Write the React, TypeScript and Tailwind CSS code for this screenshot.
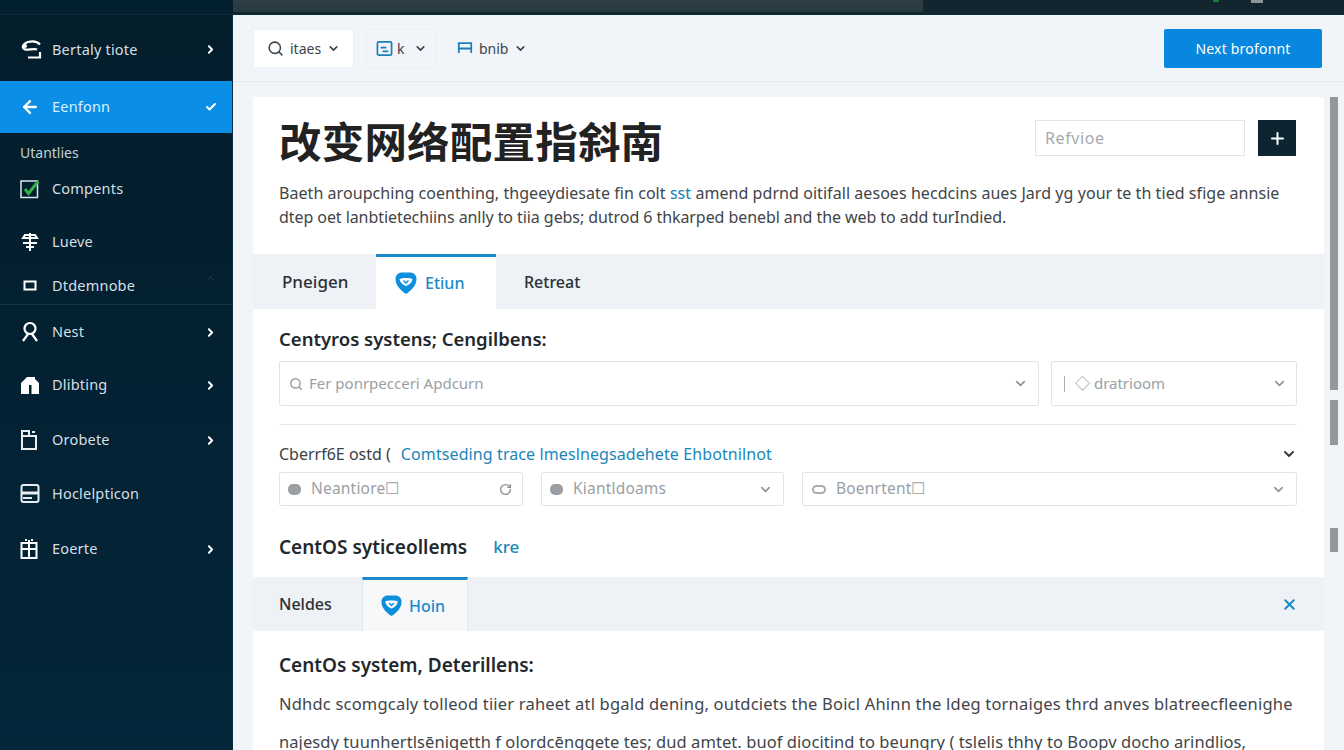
import { ArrowLeft, Check, ChevronDown, ChevronRight, ChevronUp, Plus, RotateCw, Search, X } from "lucide-react";
import type { ReactNode } from "react";

const sans = "font-['Noto_Sans','Noto_Sans_CJK_SC',sans-serif]";

function Shield({ className }: { className?: string }) {
  return (
    <svg viewBox="0 0 24 24" className={className}>
      <path d="M12 23C6 19 1.500 14 1.500 8 1.500 4 4.500 1.500 8 1.500h8c3.500 0 6.500 2.500 6.500 6.500 0 6-4.500 11-10.500 15z" fill="#0e8fdc" />
      <path d="M5.500 8c2-1.500 11-1.500 13 0-.5 3.500-3.500 6-6.500 7-3-1-6-3.500-6.500-7z" fill="#fff" />
      <path d="M9.500 9.500 12 12l2.500-2.500" fill="none" stroke="#0e8fdc" strokeWidth="1.500" />
    </svg>
  );
}

function SideIcon({ name }: { name: string }) {
  if (name === "sync")
    return (
      <svg viewBox="0 0 22 22" className="w-[22px] h-[22px]" fill="none" stroke="#fff" strokeWidth="2.200">
        <path d="M20 5.500C17 2 12 2 8 3 3 4.500 1 9 5 10.500c3 1 9-1.500 12 0" />
        <path d="M20 13v5.500H8" />
        <circle cx="5" cy="7" r="2" fill="#fff" stroke="none" />
      </svg>
    );
  if (name === "check")
    return (
      <svg viewBox="0 0 20 20" className="w-[20px] h-[20px]" fill="none">
        <rect x="1" y="2" width="16.500" height="16.500" stroke="#dfe7ea" strokeWidth="1.500" />
        <path d="M5 10l3.500 4.500L18 2.500" stroke="#32b44a" strokeWidth="3" />
      </svg>
    );
  if (name === "post")
    return (
      <svg viewBox="0 0 20 20" className="w-[20px] h-[20px]" fill="none" stroke="#fff" strokeWidth="2">
        <path d="M10 1v18M3 6h14l-2-3H5zM3 11h14M6 15h8" />
      </svg>
    );
  if (name === "box")
    return (
      <svg viewBox="0 0 14 12" className="w-[14px] h-[12px] ml-[3px]" fill="none" stroke="#fff" strokeWidth="2">
        <rect x="1.500" y="1.500" width="11" height="8" />
      </svg>
    );
  if (name === "ribbon")
    return (
      <svg viewBox="0 0 20 22" className="w-[20px] h-[22px]" fill="none" stroke="#fff" strokeWidth="2.200">
        <circle cx="10" cy="7.500" r="5.500" />
        <path d="M8 13l-5 7M12 13l5 7" />
      </svg>
    );
  if (name === "home")
    return (
      <svg viewBox="0 0 20 20" className="w-[20px] h-[20px]">
        <path d="M1 8 7 2h8v2l4 4v11H1z" fill="#fff" />
        <rect x="9" y="10" width="2.500" height="9" fill="#03202f" />
      </svg>
    );
  if (name === "folder")
    return (
      <svg viewBox="0 0 18 22" className="w-[18px] h-[22px]" fill="none" stroke="#e8eef0" strokeWidth="2">
        <path d="M2 7v13h14V7zM2 7V2h7v5M12 3h3" />
      </svg>
    );
  if (name === "monitor")
    return (
      <svg viewBox="0 0 20 22" className="w-[20px] h-[22px]" fill="none" stroke="#e8eef0" strokeWidth="2">
        <rect x="1.500" y="2" width="17" height="17" rx="2" />
        <path d="M2 10h16" strokeWidth="3" />
        <path d="M3 15h9" />
      </svg>
    );
  return (
    <svg viewBox="0 0 18 22" className="w-[18px] h-[22px]" fill="none" stroke="#fff" strokeWidth="2">
      <rect x="1.500" y="5" width="15" height="15" />
      <path d="M9 2v18M1.500 11h15M5 2h2M11 2h2" />
    </svg>
  );
}

function NavRow({ icon, label, arrow = true, className = "", children }: { icon: string; label: string; arrow?: boolean; className?: string; children?: ReactNode }) {
  return (
    <div className={`flex items-center pl-[20px] pr-[15px] text-[14.500px] tracking-[0.2px] text-[#d5dfe3] ${className}`}>
      <span className="w-[32px] flex items-center"><SideIcon name={icon} /></span>
      <span className="flex-1">{label}</span>
      {arrow && <ChevronRight className="w-[13px] h-[13px] text-white" strokeWidth={3.500} />}
      {children}
    </div>
  );
}

function Field({ className = "", icon, text, end }: { className?: string; icon?: ReactNode; text: string; end?: ReactNode }) {
  return (
    <div className={`flex items-center border border-[#e2e5e8] rounded-[2px] bg-white text-[#9aa0a5] ${className}`}>
      {icon}
      <span className="flex-1">{text}</span>
      {end ?? <ChevronDown className="w-[15px] h-[15px] text-[#8b9196]" strokeWidth={2.500} />}
    </div>
  );
}

function Blob() {
  return <span className="w-[13px] h-[11px] rounded-[5px] bg-[#9a9fa3] mr-[10px]" />;
}

export default function App() {
  return (
    <div className={`w-[1344px] h-[750px] overflow-hidden flex flex-col bg-[#f1f4f8] ${sans}`}>
      {/* top strip */}
      <div className="h-[15px] shrink-0 bg-[#13252e] flex border-b border-[#0d2a38]">
        <div className="w-[233px] bg-[#03202f]" />
        <div className="w-[690px] h-[12px] bg-gradient-to-b from-[#2f4045] to-[#263a40]" />
        <div className="ml-[290px] w-[6px] h-[2px] bg-[#1f7a3c]" />
        <div className="ml-[32px] w-[12px] h-[3px] bg-[#8d9599]" />
      </div>
      <div className="flex flex-1 min-h-0">
        <aside className="w-[233px] shrink-0 bg-gradient-to-b from-[#031d2b] to-[#04263a] flex flex-col border-r border-[#0c2b3a]">
          <NavRow icon="sync" label="Bertaly tiote" className="h-[66px] pt-[3px]" />
          <div className="h-[52px] bg-[#0a8ee6] flex items-center pl-[20px] pr-[15px] text-[14.500px] tracking-[0.2px] text-[#d8f0ff]">
            <span className="w-[32px]"><ArrowLeft className="w-[20px] h-[20px] text-white" strokeWidth={2.800} /></span>
            <span className="flex-1">Eenfonn</span>
            <Check className="w-[12px] h-[12px] text-white" strokeWidth={4} />
          </div>
          <div className="h-[38px] flex items-center pl-[20px] text-[14px] text-[#c3cfd4]">Utantlies</div>
          <NavRow icon="check" label="Compents" arrow={false} className="h-[36px]" />
          <NavRow icon="post" label="Lueve" arrow={false} className="h-[70px]" />
          <NavRow icon="box" label="Dtdemnobe" arrow={false} className="h-[18px] text-[#b5c2c8]">
            <ChevronUp className="w-[13px] h-[13px] -mt-[16px] text-[#143345]" strokeWidth={2.500} />
          </NavRow>
          <div className="h-[10px] border-b border-[#123444]" />
          <NavRow icon="ribbon" label="Nest" className="h-[54px]" />
          <NavRow icon="home" label="Dlibting" className="h-[52px]" />
          <NavRow icon="folder" label="Orobete" className="h-[58px]" />
          <NavRow icon="monitor" label="Hoclelpticon" arrow={false} className="h-[50px]" />
          <NavRow icon="gift" label="Eoerte" className="h-[60px]" />
        </aside>
        <main className="flex-1 min-w-0 flex flex-col">
          <div className="h-[67px] shrink-0 flex items-center pl-[20px] pr-[22px] border-b border-[#e6e9ed] text-[14px] text-[#39454c]">
            <div className="w-[101px] h-[39px] bg-white border border-[#eef0f3] flex items-center pl-[13px] gap-[6px]">
              <Search className="w-[17px] h-[17px] text-[#39454c]" strokeWidth={2.200} />
              <span>itaes</span>
              <ChevronDown className="w-[13px] h-[13px]" strokeWidth={3} />
            </div>
            <div className="ml-[12px] w-[71px] h-[39px] border border-[#ebeef1] flex items-center pl-[9px] gap-[4px]">
              <svg viewBox="0 0 18 18" className="w-[17px] h-[17px]" fill="none" stroke="#1a7fb5" strokeWidth="1.800">
                <rect x="1.500" y="2" width="15" height="14" rx="1.500" />
                <path d="M5 8h6M7 12h6" />
              </svg>
              <span>k</span>
              <ChevronDown className="w-[13px] h-[13px] ml-[6px]" strokeWidth={3} />
            </div>
            <div className="ml-[20px] flex items-center gap-[6px]">
              <svg viewBox="0 0 18 18" className="w-[16px] h-[17px]" fill="none" stroke="#1a7fb5" strokeWidth="2">
                <path d="M2 14V3h14v11M2 9h14" />
              </svg>
              <span>bnib</span>
              <ChevronDown className="w-[13px] h-[13px]" strokeWidth={3} />
            </div>
            <div className="ml-auto w-[158px] h-[39px] bg-[#0788de] rounded-[2px] flex items-center justify-center text-[14px] tracking-[0.2px] text-white">Next brofonnt</div>
          </div>
          <div className="flex-1 min-h-0 flex pl-[20px] pr-[6px] pt-[15px] gap-[6px]">
            <div className="flex-1 min-w-0 bg-white">
              <div className="pl-[26px] pr-[28px]">
                <div className="flex items-start h-[76px] pt-[23px]">
                  <h1 className="text-[42.500px] leading-[44px] font-bold tracking-[0.2px] text-[#222]">改变网络配置指斜南</h1>
                  <div className="ml-auto w-[210px] h-[36px] border border-[#e2e5e8] flex items-center pl-[9px] text-[16px] tracking-[0.6px] text-[#a6abaf]">Refvioe</div>
                  <div className="ml-[13px] w-[38px] h-[36px] bg-[#0d2431] flex items-center justify-center">
                    <Plus className="w-[19px] h-[19px] text-white" strokeWidth={2.500} />
                  </div>
                </div>
                <p className="text-[16px] leading-[24px] text-[#3f4549] mt-[8px] h-[73px] whitespace-nowrap">
                  <span className="tracking-[0.06px]">Baeth aroupching coenthing, thgeeydiesate fin colt <span className="text-[#1a7fb5]">sst</span> amend pdrnd oitifall aesoes hecdcins aues Jard yg your te th tied sfige annsie</span>
                  <br />
                  <span className="tracking-[-0.07px]">dtep oet lanbtietechiins anlly to tiia gebs; dutrod 6 thkarped benebl and the web to add turIndied.</span>
                </p>
              </div>
              <div className="h-[55px] bg-[#eef1f5] flex items-center text-[16px] font-medium text-[#2a3034]">
                <span className="w-[123px] pl-[29px] text-[17px]">Pneigen</span>
                <div className="w-[120px] h-full bg-white border-t-[3px] border-[#1a8ac9] flex items-center pl-[18px] gap-[7px] text-[#1a8ac9]">
                  <Shield className="w-[24px] h-[24px]" />
                  <span>Etiun</span>
                </div>
                <span className="pl-[28px]">Retreat</span>
              </div>
              <div className="pl-[26px] pr-[27px]">
                <h2 className="text-[18.500px] leading-[24px] font-semibold text-[#23282c] mt-[18px]">Centyros systens; Cengilbens:</h2>
                <div className="flex gap-[12px] mt-[10px] text-[15px]">
                  <Field className="w-[760px] h-[45px] pl-[9px] pr-[10px]" icon={<Search className="w-[14px] h-[14px] mr-[6px] text-[#9aa0a5]" strokeWidth={2.500} />} text="Fer ponrpecceri Apdcurn" />
                  <Field className="flex-1 h-[45px] pl-[12px] pr-[9px]" icon={<span className="w-[1px] h-[16px] bg-[#a8adb1] mr-[10px]" />} text="◇ dratrioom" />
                </div>
                <div className="h-[1px] bg-[#e6e8eb] mt-[18px]" />
                <div className="flex items-center h-[30px] mt-[14px] text-[16px]">
                  <span className="text-[#3a4044]">Cberrf6E ostd (</span>
                  <span className="text-[#1a87b8] ml-[10px] tracking-[0.1px]">Comtseding trace lmeslnegsadehete  Ehbotnilnot</span>
                  <ChevronDown className="ml-auto w-[16px] h-[16px] text-[#3a4044]" strokeWidth={3} />
                </div>
                <div className="flex gap-[18px] mt-[3px] text-[15.500px] tracking-[0.2px]">
                  <Field
                    className="w-[244px] h-[34px] pl-[8px] pr-[10px]"
                    icon={<Blob />}
                    text="Neantiore☐"
                    end={<RotateCw className="w-[13px] h-[13px] text-[#8b9196]" strokeWidth={2.500} />}
                  />
                  <Field className="w-[243px] h-[34px] pl-[8px] pr-[10px]" icon={<Blob />} text="Kiantldoams" />
                  <Field className="flex-1 h-[34px] pl-[9px] pr-[10px]" icon={<span className="w-[14px] h-[9px] rounded-[5px] border-2 border-[#a8adb1] mr-[10px]" />} text="Boenrtent☐" />
                </div>
                <div className="flex items-center h-[26px] mt-[28px] text-[19px] font-semibold text-[#23282c]">
                  CentOS syticeollems
                  <span className="ml-[26px] text-[17px] font-medium text-[#1a87b8]">kre</span>
                </div>
              </div>
              <div className="h-[54px] mt-[17px] bg-[#eef1f5] flex items-center text-[16px] font-medium text-[#2a3034] pr-[26px]">
                <span className="w-[109px] pl-[26px]">Neldes</span>
                <div className="w-[106px] h-full bg-[#f6f8fa] border-t-[3px] border-r border-l border-l-[#e3e6ea] border-r-[#e3e6ea] border-t-[#1a8ac9] flex items-center pl-[17px] gap-[6px] text-[#1a8ac9]">
                  <Shield className="w-[23px] h-[23px]" />
                  <span>Hoin</span>
                </div>
                <X className="ml-auto w-[17px] h-[17px] text-[#1a87c4]" strokeWidth={2.800} />
              </div>
              <div className="pl-[26px] pr-[28px] whitespace-nowrap">
                <h2 className="text-[19px] leading-[24px] font-semibold text-[#23282c] mt-[22px]">CentOs system, Deterillens:</h2>
                <p className="text-[16.500px] leading-[16px] tracking-[0.2px] text-[#3f4549] mt-[19px]">
                  Ndhdc scomgcaly tolleod tiier raheet atl bgald dening, outdciets the Boicl Ahinn the ldeg tornaiges thrd anves blatreecfleenighe
                </p>
                <p className="text-[16.500px] leading-[16px] tracking-[0.07px] text-[#3f4549] mt-[22px]">
                  najesdy tuunhertlsēnigetth f olordcēnggete tes; dud amtet. buof diocitind to beungry ( tslelis thhy to Boopv docho arindlios,
                </p>
              </div>
            </div>
            <div className="w-[8px] shrink-0 flex flex-col">
              <div className="h-[293px] bg-[#94989b]" />
              <div className="h-[45px] mt-[10px] bg-[#94989b]" />
              <div className="h-[24px] mt-[83px] bg-[#94989b]" />
            </div>
          </div>
        </main>
      </div>
    </div>
  );
}
